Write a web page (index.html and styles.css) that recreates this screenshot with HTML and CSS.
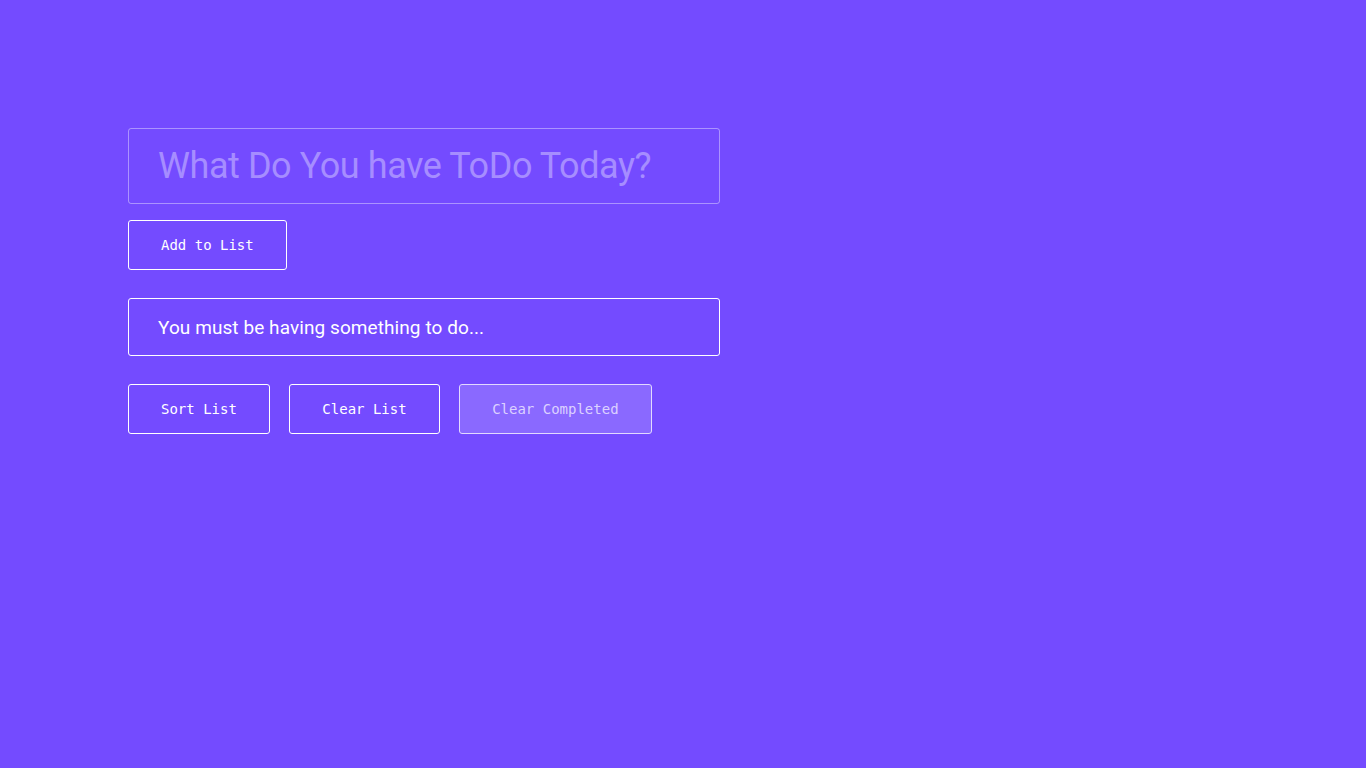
FILE: index.html
```html
<!DOCTYPE html>
<html lang="en">
<head>
<meta charset="utf-8">
<title>ToDo</title>
<link rel="stylesheet" href="styles.css">
</head>
<body>
<main class="app">
  <input class="todo-input" type="text" placeholder="What Do You have ToDo Today?">
  <div class="row add-row">
    <button class="btn">Add to List</button>
  </div>
  <div class="list-box">You must be having something to do...</div>
  <div class="row actions">
    <button class="btn">Sort List</button>
    <button class="btn">Clear List</button>
    <button class="btn btn-muted">Clear Completed</button>
  </div>
</main>
</body>
</html>
```

FILE: styles.css
```css
* { box-sizing: border-box; }
html, body {
  margin: 0;
  padding: 0;
  background: #744bff;
  height: 100%;
}
body {
  font-family: Roboto, "Liberation Sans", sans-serif;
}
.app {
  padding: 128px 0 0 128px;
  display: flex;
  flex-direction: column;
  align-items: flex-start;
}
.todo-input {
  width: 592px;
  height: 76px;
  background: transparent;
  border: 1px solid rgba(255, 255, 255, 0.4);
  border-radius: 3px;
  padding: 0 29px;
  font-family: Roboto, "Liberation Sans", sans-serif;
  font-size: 36px;
  letter-spacing: -0.43px;
  color: #fff;
  outline: none;
}
.todo-input::placeholder {
  color: #a68dff;
  opacity: 1;
}
.row {
  display: flex;
  gap: 19.5px;
}
.add-row { margin-top: 16px; }
.btn {
  height: 50px;
  padding: 0 32px;
  background: transparent;
  border: 1px solid #fff;
  border-radius: 3px;
  color: #fff;
  font-family: "DejaVu Sans Mono", monospace;
  font-size: 14px;
  cursor: pointer;
}
.btn-muted {
  background: #8a69ff;
  border-color: #e2d9ff;
  color: #dcd1ff;
}
.list-box {
  margin-top: 28px;
  width: 592px;
  height: 58px;
  border: 1px solid #fff;
  border-radius: 3px;
  padding: 0 29px;
  display: flex;
  align-items: center;
  font-size: 19px;
  letter-spacing: 0.08px;
  color: #fff;
}
.actions { margin-top: 28px; }
```
